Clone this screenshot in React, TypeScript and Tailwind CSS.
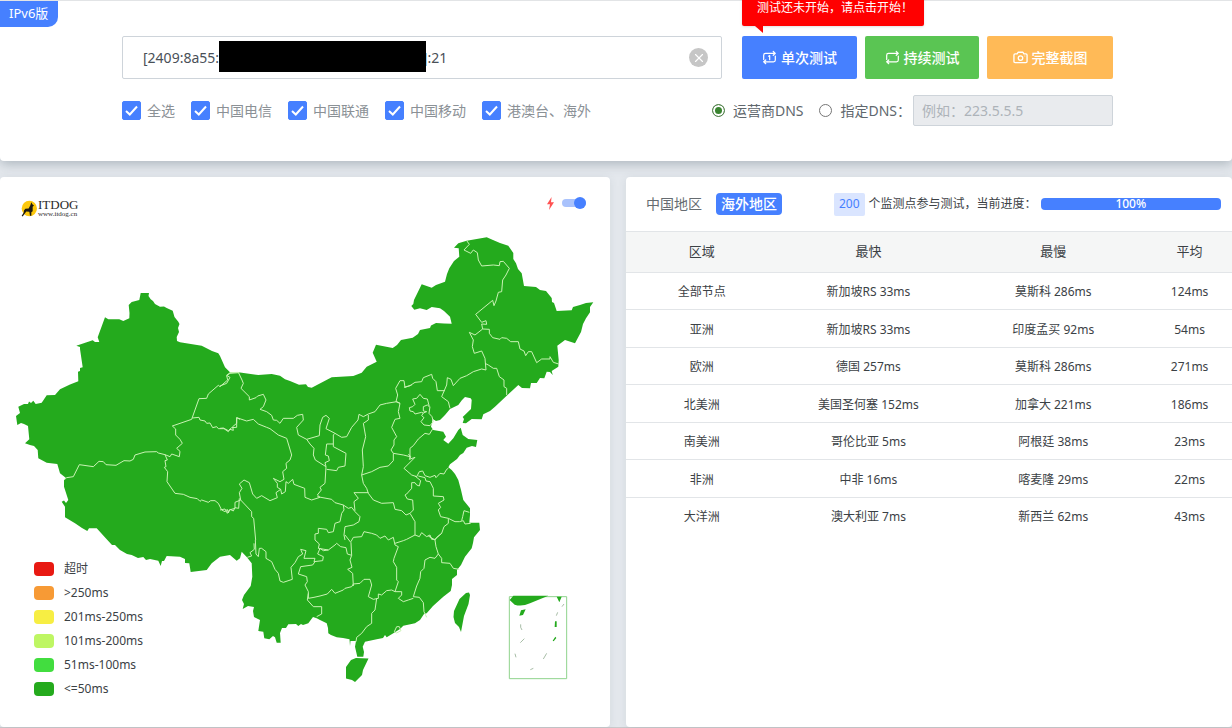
import { useState } from 'react';
import type { ReactNode } from 'react';
import { X } from 'lucide-react';

const carriers = ['全选', '中国电信', '中国联通', '中国移动', '港澳台、海外'];

const rows = [
  { area: '全部节点', fastest: '新加坡RS 33ms', slowest: '莫斯科 286ms', avg: '124ms' },
  { area: '亚洲', fastest: '新加坡RS 33ms', slowest: '印度孟买 92ms', avg: '54ms' },
  { area: '欧洲', fastest: '德国 257ms', slowest: '莫斯科 286ms', avg: '271ms' },
  { area: '北美洲', fastest: '美国圣何塞 152ms', slowest: '加拿大 221ms', avg: '186ms' },
  { area: '南美洲', fastest: '哥伦比亚 5ms', slowest: '阿根廷 38ms', avg: '23ms' },
  { area: '非洲', fastest: '中非 16ms', slowest: '喀麦隆 29ms', avg: '22ms' },
  { area: '大洋洲', fastest: '澳大利亚 7ms', slowest: '新西兰 62ms', avg: '43ms' },
];

const legend = [
  { label: '超时', color: 'bg-[#e81912]' },
  { label: '>250ms', color: 'bg-[#f79a35]' },
  { label: '201ms-250ms', color: 'bg-[#f7ee43]' },
  { label: '101ms-200ms', color: 'bg-[#bef663]' },
  { label: '51ms-100ms', color: 'bg-[#42dd3f]' },
  { label: '<=50ms', color: 'bg-[#24aa1d]' },
];

const mainland =
  '16,416 20,413 18.3,406.7 24,404 28,404 29,401.5 31,403 33.3,400.7 35.7,404 41.7,402.7 46.7,395.3 55,395 60,389.3 70,384.5 78.3,381.3 78,371.7 80,371 80,368 82.7,367.3 80,349 80,347 76.3,345.7 92.7,340.3 95,342 99.3,342 97.7,337.3 105,317.3 108.3,319.3 119.3,319.3 123.3,321 129.3,318.3 129.5,313 128.7,305 131.7,302 139.3,300 140.7,293 149,293 148.5,296 150.7,299.3 153,301 155,304 160,306.7 164,306.5 166.7,308 172.7,310.7 174.5,317 178.3,321.7 179.5,324 178,328 179,332 176.7,337 177,341 180,342.3 201.7,345.7 212,351 218.3,353.3 220,356 225,367.3 230,372.3 238.3,372.3 258.3,375 271.7,374 280,375.7 285,379.3 290,381 299,384.7 306,384.3 308,387 311.7,387.7 331.7,377.3 353.3,376 361.7,372.7 366.7,366.7 376.7,361.7 372.7,352.7 376,344.7 392.7,348 397,345 401,340 412.7,337.7 418,334 420,330 430,328 431,325.5 436,323 444,323.5 451.7,323.7 450,316.7 444,311 440,308.3 431.7,307 426.7,310 420,308.3 414.3,309.7 411.3,306 413.3,304 414,300 421.7,284.3 431.7,287.7 436,285 445,281.7 447,274 449.3,268.3 454,261 459.3,256.7 458.7,248.3 454,247.7 458.3,243.3 466.7,240.7 486.7,237.3 493,240 500,243 508.3,245.7 513.3,253 513.3,259 516,263.3 518,269 521.7,273.3 524,286 536,287 540,290 546,291 551.7,298 552,302 554,303 556.7,311 571.7,310.3 573,307 580,305 586,303 593.3,302.3 590,307 590,312.3 586,318.3 583,324 581,332 575,343.3 565,340 557.3,345.7 558.7,360 558.3,366.7 551.7,371 552.7,375 550,372 546.7,371.7 544.3,378.3 540,378 536.7,383 531,383 530,388.3 522,388 518.3,385 514,389 506.7,395.7 495,406.7 490,411 483.3,414.3 481.7,419.3 471.7,419 466,423.3 462.7,423 464,419 462.7,417 471,409 471.7,400 470.7,398.3 465,397 462,400 458.3,405 450,409 445,415 440,420 436,421 432.7,419 431,426.7 433.3,430 443.3,431.7 446,436.7 443.3,440 448.3,443.7 453.3,438.3 458.3,430 460.7,427.7 462.7,435 468.3,439 477.3,440 476,447 472,446 466.7,447.7 463.3,453 460,455 457,459 450,464.3 448.3,467.3 451.7,470 455,474 458.3,480 461,490 463.3,500 470,508.3 470,515 469.3,522.7 479.3,522.7 480,530 474,537.3 473,543 471.7,548.3 465,556.7 461,565 457,570 457,575 452,579 452,585 450.7,591 443.3,596.7 433,606 426.7,613.3 424,614 420,620 415,623.3 403.3,625.7 400,629 393.3,633.3 386.7,637.3 385,635 383,638 376.7,639.3 365,641.7 362.7,646.7 364,652 363.3,656.7 357.3,656.7 355,646.7 356,641 350.5,641 350,646 349.5,639.3 343,638 336.7,637.3 331,635 328.3,633.3 328,628 326.7,623.3 320,620 316.7,618.3 313,617 308.3,623.3 303,625 301,624 298.3,626 296,624 288.3,624.3 286,628 282,628 280,633 280.7,642.7 276.7,642.7 275,637.3 273,636 269.3,639.3 264.3,638.3 263.3,631.7 258.3,631 260,620 254,617 253,611 254,607 248,606 242.7,609 244,604 242,600 244,595 250.7,586 252.3,576.7 251.7,563.3 246.7,557 241.7,551.7 240,558.3 236.7,560.7 230,555 220,556.7 211.7,563.3 206.7,570 190.7,572 189.3,563.3 185,563 185,559 180,556.7 166.7,556 164,561 162,561 160.7,566 158.3,560.7 150,559 146,560 143.3,557 138,558 131.7,555 127,554 120,550 115,545 112,545 106.7,539.3 96.7,528.3 89,528.3 87.3,531 82,528 75,523.3 65,517.3 65,506.7 61.7,501.7 64,500.5 66,503 68.3,500 64,486.7 64,479.5 66,478 60,473.3 57.3,464 46.7,462.7 38.3,458.3 37.7,450 34,446 30,445 25,443.3 29.3,439.3 28,426 24,424 21,423 17.3,425';

// province borders, grouped by region and drawn at three times map scale
const borders = [
  {
    region: 'west',
    transform: 'translate(0 280) scale(.33333)',
    lines: [
      '192,600 200,593 220,590 238,554 280,560 297,544 310,545 318,554 348,556 372,542 390,543 400,538 405,525 435,516 470,515 475,519 495,524 510,530 515,522 538,530 540,514 530,505 547,490 540,478 527,465 527,447 517,438 575,418 597,356 620,355 625,342 655,316 660,320 683,300 680,287 690,280 718,278',
      '495,524 502,540 495,542 498,560 493,562 503,575 501,605 525,640 550,643 570,652 592,656 600,664 605,660 625,667 632,662 645,662 655,670 665,690 675,695 682,688 685,699 690,688 700,693 705,683 716,685 718,655',
      '577,414 597,412 600,420 615,423 620,430 630,429 638,443 650,440 655,446 672,446 685,455 690,448 700,451 698,440 710,430 710,413 720,418',
    ],
  },
  {
    region: 'centre',
    transform: 'translate(220 340) scale(.33333)',
    lines: [
      '0,138 20,130 30,112 20,106 30,98 55,97 66,120 70,130 63,145 88,170 88,180 108,173 113,168 130,163 138,180 130,200 120,208 140,215 155,226 160,240 170,241 180,250 190,235 220,235 232,226 248,223 250,240 230,262 235,285 260,298 298,287 300,255 308,232 318,226 328,235 318,266 345,280 365,292 380,290 395,262 414,240 417,223 430,230 445,222 465,215 480,195 500,190 530,185 540,190',
      '260,298 270,312 282,325 280,345 286,360 310,375 318,380 315,368 328,362 325,348 316,345 320,312 340,312 340,285 345,280',
      '340,312 340,320 378,340 375,378 355,382 350,392 320,388',
      '318,380 315,430 300,442 304,450 292,465 300,472 275,480 255,472 254,445 222,433 218,418 205,430 198,425 196,455 185,462 182,448 168,458 172,473 150,482 125,467 110,475 98,462 88,428 72,420 58,432 66,445 58,458 62,480 45,487 45,505 28,510 22,520 15,507 0,510',
      '0,265 10,264 25,272 35,263 50,262 50,233 80,243 100,238 115,252 140,262 150,266 175,285 200,295 207,318 215,345 210,360 198,370 200,385 188,395 192,418 180,425 160,415 172,430 172,442 182,448',
      '62,480 95,515 95,530 101,535 107,600',
      '292,470 335,478 345,488 370,495 385,505 395,502 405,515 420,530 417,545 400,555 375,560 372,585 375,600',
      '370,495 372,510 365,520 360,545 345,550 340,575 325,578 320,568 295,565 295,580 285,582 285,600',
      '445,225 445,240 430,250 437,290 427,330 430,380 425,405 430,430 440,445 445,460 460,480 485,490 520,488 525,508 545,512 558,525 570,520 585,545 585,585',
      '425,405 455,395 480,382 505,378 520,362 520,340 513,330 522,315 522,300 530,290 515,262 525,238 540,235 535,215 540,190 528,185 533,165 527,145 540,122 552,122 555,142 575,135',
      '520,340 550,345 570,350',
      '445,458 402,458 415,475 402,485 405,512',
    ],
  },
  {
    region: 'northeast',
    transform: 'translate(350 225) scale(.33333)',
    lines: [
      '350,47 358,58 342,75 362,85 370,75 382,83 385,105 395,123 430,120 448,122 450,110 460,109 478,130 468,150 458,165 455,200 445,202 438,228 432,242 428,226 377,268 395,292 408,287 410,298 395,297 398,312',
      '358,322 375,330 398,312 418,313 418,325 428,338 450,343 455,338 470,340 482,350 505,350 510,372 522,378 527,392 535,380 545,380 560,413 575,402 600,402 600,395 610,412 626,417',
      '358,322 370,345 367,365 373,385 395,378 405,400 408,435 395,432 370,440 350,452 330,460 310,482 303,463 292,458 290,480 275,515 295,530 300,550',
      '405,415 415,420 430,430 440,430 448,455 462,465 462,485 470,490 470,510',
      '285,497 262,497 258,470 248,460 245,448 220,458 215,470 195,472 180,482 162,487',
      '188,545 178,548 180,558 190,560 195,567 215,562 220,564 230,560 220,558 220,545 232,540 238,545 232,522 220,520 210,508 200,520 188,522 195,538 188,545',
      '220,564 215,572 222,578 213,590 222,600 240,602 250,590 246,575 237,565 240,545',
      '248,612 238,628 225,625 205,642 190,662 180,670 180,700',
    ],
  },
  {
    region: 'east',
    transform: 'translate(380 380) scale(.33333)',
    lines: [
      '85,222 92,230 88,238 105,232 72,265 95,285 110,290 118,275 128,273 135,287 150,292 165,286 168,293 180,280 192,282 200,268 205,265',
      '105,288 122,302 118,318 110,315 105,308 95,308 95,325 80,342 75,345 82,357 98,360 100,390 90,400',
      '115,288 135,293 138,303 150,305 160,325 160,348 190,350 192,360 175,370 182,382 175,390 182,410 205,415 225,425 238,425 250,422 255,432 272,430',
      '245,422 248,410 252,392 268,397',
      '205,415 205,430 192,440 185,460 165,478 155,478 150,465 140,470 125,458 118,470 105,465 80,478',
    ],
  },
  {
    region: 'south',
    transform: 'translate(220 480) scale(.33333)',
    lines: [
      '106,180 108,222 115,230 118,205 125,205 138,215 138,235 155,245 165,268 175,280 180,303 190,307 217,298 213,262 225,248 235,230 248,222 242,208 258,212 252,235 285,235 282,245 308,242 310,230 293,222 300,205 310,212 325,210 345,195 350,190 362,200 378,203 382,222 395,226',
      '285,180 298,192 295,205 325,210',
      '375,165 393,188 395,226 390,240 396,262 383,268 398,280 400,318',
      '285,245 278,255 242,260 235,282 260,290 262,305 255,315 265,335 265,355 282,352 300,348 322,342 335,328 345,340 370,330 375,325 395,320 400,312 420,310 432,298 450,298 455,315 445,350 460,358 475,355 475,342 485,345 500,332 515,330 525,335',
      '265,340 262,360 280,380 305,380 305,402 290,410',
      '393,185 400,172 425,170 432,155 455,160 470,165 480,175 495,168 505,180 520,172 525,195 535,200 522,235 520,245 530,262 530,300 535,305 525,335 545,335 545,345 535,355 550,365 565,360 580,355',
      '470,355 465,390 455,400 455,430 440,440 425,460 410,472 408,485',
      '525,190 550,182 560,178',
      '625,168 645,180 648,200 655,222 645,235 630,232 615,240 612,265 602,275 600,295 590,318 580,350 598,352 610,368 612,395 620,412',
      '645,180 650,172 665,160',
      '655,222 665,235 665,248 690,250 700,265 718,268',
      '82,232 95,228 90,218 103,208 102,190',
      '523,455 530,440 538,440 543,452 530,459 523,455',
    ],
  },
];

function ChinaMap() {
  return (
    <svg viewBox="0 217 610 480" className="block w-full" role="img" aria-label="map">
      <g fill="#24aa1d">
        <polygon points={mainland} />
        <polygon points="346,667 351,660 356,658 368.5,658.5 363,670 362,675 355,682 352,680 346,678.5" />
        <polygon points="466,593 469,592.5 470,595 468.5,604 464,616 461,632 459,627 455,623 453.5,617 454,611 459.5,599" />
      </g>
      {borders.map((group) => (
        <g key={group.region} transform={group.transform} fill="none" stroke="#c9f3b4" strokeWidth="3" strokeLinejoin="round">
          {group.lines.map((line) => (
            <polyline key={line} points={line} />
          ))}
        </g>
      ))}
      {/* South China Sea inset */}
      <g transform="translate(480 560) scale(.33333)">
        <path d="M88 110H260V356H88Z" fill="none" stroke="#8fd38c" strokeWidth="3" />
        <path d="M100 107H205L150 130Q125 141 104 134L89 120Z" fill="#24aa1d" />
        <path d="M230 110H245L238 127ZM123 151L137 148L129 165L118 167ZM225 184H230V201H224ZM226 230L229 234L221 244L218 242Z" fill="#24aa1d" />
        <path d="M252 132L246 140M233 157L229 167M122 193V202L126 210M133 236L121 248M105 281L108 292M200 280L190 297M151 329L160 325" fill="none" stroke="#7a9c78" strokeWidth="2" />
      </g>
    </svg>
  );
}

function LoopIcon({ once }: { once?: boolean }) {
  return (
    <svg viewBox="0 0 16 16" className="size-[15px]" fill="none" stroke="currentColor" strokeWidth="1.3" strokeLinecap="round" strokeLinejoin="round">
      <path d="M1.8 10V5.6Q1.8 3.6 3.8 3.6H14M12 1.6L14.2 3.6L12 5.6" />
      <path d="M14.2 6.4V10.6Q14.2 12.6 12.2 12.6H2M4 10.6L1.8 12.6L4 14.6" />
      {once && <path d="M7 6.6L8.2 5.9V10.4" />}
    </svg>
  );
}

function CameraIcon() {
  return (
    <svg viewBox="0 0 16 16" className="size-[15px]" fill="none" stroke="currentColor" strokeWidth="1.4" strokeLinejoin="round">
      <path d="M2.2 4.2H4.4L5.4 2.4H10.6L11.6 4.2H13.8Q15 4.2 15 5.4V12.2Q15 13.4 13.8 13.4H2.2Q1 13.4 1 12.2V5.4Q1 4.2 2.2 4.2Z" />
      <circle cx="8" cy="8.6" r="2.4" />
      <path d="M12.4 6.4H13" />
    </svg>
  );
}

function ActionButton({ color, icon, children }: { color: string; icon: ReactNode; children: ReactNode }) {
  return (
    <button className={`flex h-full items-center justify-center gap-1 rounded-xs text-sm font-medium text-white ${color}`}>
      {icon}
      {children}
    </button>
  );
}

function Logo() {
  return (
    <div className="mt-[3px] flex items-center gap-px">
      <svg viewBox="0 0 48 50" className="h-[17px] w-4">
        <circle cx="25" cy="25" r="23" fill="#fcc80d" />
        <path d="M31 6L34 12L39 16L35 20L35 33L31 36L31 47H27L25 35L16 34L11 41L5 49L2 47L8 38L9 31L13 26L23 25L28 15Z" fill="#1c1a12" />
      </svg>
      <div className="flex flex-col font-['Liberation_Serif',serif] text-[#2a2a2a]">
        <span className="text-[13px] leading-[13px]">ITDOG</span>
        <span className="text-[7px] leading-[7px]">www.itdog.cn</span>
      </div>
    </div>
  );
}

export default function App() {
  const [dns, setDns] = useState('isp');
  const [host, setHost] = useState(`[2409:8a55:${'\u00a0'.repeat(56)}]:21`);

  return (
    <div className="flex min-h-screen flex-col border-b border-[#c8cacc] bg-[#e4e8ed] font-['Noto_Sans','Noto_Sans_CJK_SC',sans-serif] text-[#3b4145]">
      <section className="relative rounded-b-sm border-t border-[#e2e4e6] bg-white pt-[35px] pr-[119px] pb-[35px] pl-[122px] shadow-[0_3px_12px_rgba(69,90,100,0.35)]">
        <span className="absolute top-0 left-0 flex h-[26px] items-center rounded-br-[10px] bg-[#4680ff] pr-2.5 pl-[9px] text-[13px] text-white">
          IPv6版
        </span>

        <div className="flex h-[43px] gap-5">
          <div className="relative flex-1">
            <input
              aria-label="host"
              value={host}
              onChange={(e) => setHost(e.target.value)}
              className="h-full w-full rounded-xs border border-[#ced4da] bg-white pr-10 pl-5 text-sm text-[#495057] outline-none"
            />
            <span className="absolute top-[5px] left-[97px] h-[31px] w-[207px] bg-black" />
            <button
              aria-label="clear"
              className="absolute top-3 right-3.5 flex size-[19px] items-center justify-center rounded-full bg-[#c6c6c6] text-white"
            >
              <X className="size-3.5" strokeWidth={2} />
            </button>
          </div>
          <div className="relative grid grid-cols-[115px_114px_126px] gap-2">
            <ActionButton color="bg-[#4680ff]" icon={<LoopIcon once />}>单次测试</ActionButton>
            <ActionButton color="bg-[#5ac553]" icon={<LoopIcon />}>持续测试</ActionButton>
            <ActionButton color="bg-[#ffba57]" icon={<CameraIcon />}>完整截图</ActionButton>
            <div className="absolute bottom-full left-0 mb-2.5 flex h-9 items-center rounded-xs bg-[#ff0000] pr-[11px] pl-[15px] text-xs whitespace-nowrap text-white shadow-sm">
              测试还未开始，请点击开始！
              <svg viewBox="0 0 8 7" className="absolute top-full left-[13px] h-[7px] w-2">
                <path d="M0 0H8V7Z" fill="#ff0000" />
              </svg>
            </div>
          </div>
        </div>

        <div className="mt-4 flex h-[31px] items-center justify-between text-sm">
          <div className="flex items-center gap-4 text-[#8b9196]">
            {carriers.map((name) => (
              <label key={name} className="flex items-center gap-1.5">
                <span className="relative size-[19px]">
                  <input type="checkbox" defaultChecked className="peer block size-full appearance-none rounded-xs border border-[#4680ff] checked:bg-[#4680ff]" />
                  <svg viewBox="0 0 19 19" className="pointer-events-none absolute inset-0 hidden peer-checked:block" fill="none" stroke="#fff" strokeWidth="2">
                    <path d="M4 10L7.8 13.5L15 5.5" />
                  </svg>
                </span>
                {name}
              </label>
            ))}
          </div>
          <div className="flex items-center text-[#60676d]">
            <label className="mr-4 flex items-center gap-2">
              <input
                type="radio"
                name="dns"
                checked={dns === 'isp'}
                onChange={() => setDns('isp')}
                className="size-[13px] appearance-none rounded-full border border-[#767676] checked:border-[#55804e] checked:bg-[#3a8430] checked:shadow-[inset_0_0_0_2px_#fff]"
              />
              运营商DNS
            </label>
            <label className="mr-0.5 flex items-center gap-2">
              <input
                type="radio"
                name="dns"
                checked={dns === 'custom'}
                onChange={() => setDns('custom')}
                className="size-[13px] appearance-none rounded-full border border-[#767676] checked:border-[#55804e] checked:bg-[#3a8430] checked:shadow-[inset_0_0_0_2px_#fff]"
              />
              指定DNS：
            </label>
            <input
              aria-label="DNS"
              disabled={dns !== 'custom'}
              placeholder="例如：223.5.5.5"
              className="h-[31px] w-[200px] rounded-xs border border-[#ced4da] px-2 text-sm placeholder:text-[#adb3b9] disabled:bg-[#e9ebee]"
            />
          </div>
        </div>
      </section>

      <main className="mt-4 grid flex-1 grid-cols-[610fr_606fr] gap-4">
        <section className="relative rounded-sm bg-white shadow-[0_1px_8px_rgba(69,90,100,0.1)]">
          <div className="flex h-10 items-start justify-between pt-[18px] pr-6 pl-[21px]">
            <Logo />
            <label className="flex items-center gap-2">
              <svg viewBox="0 0 7 13" className="h-[13px] w-[7px]">
                <path d="M4.6 0L0 7.2H3L2 13L7 5.3H4Z" fill="#ff5252" />
              </svg>
              <span className="relative flex h-4 w-6 items-center">
                <input type="checkbox" defaultChecked aria-label="auto" className="peer h-2 w-full appearance-none rounded-full bg-[#a9c2fc]" />
                <span className="pointer-events-none absolute right-0 size-3 rounded-full bg-[#4680ff]" />
              </span>
            </label>
          </div>
          <ChinaMap />
          <ul className="absolute bottom-[26px] left-[34px] text-xs">
            {legend.map((item) => (
              <li key={item.label} className="flex h-6 items-center gap-2.5">
                <span className={`h-3.5 w-5 rounded-sm ${item.color}`} />
                {item.label}
              </li>
            ))}
          </ul>
        </section>

        <section className="rounded-sm bg-white shadow-[0_1px_8px_rgba(69,90,100,0.1)]">
          <div className="flex h-[54px] items-center pr-[11px] pl-5 text-sm">
            <button className="text-[#666c71]">中国地区</button>
            <button className="ml-3.5 h-[22px] rounded-sm bg-[#4680ff] px-[5px] font-medium text-white">海外地区</button>
            <span className="ml-[52px] flex h-[23px] items-center rounded-xs bg-[#dae5ff] px-[5px] text-xs text-[#4680ff]">200</span>
            <span className="ml-1 text-xs whitespace-nowrap">个监测点参与测试，当前进度：</span>
            <div className="ml-1 flex h-3 flex-1 items-center justify-center rounded-sm bg-[#4680ff] text-xs font-medium text-white">
              100%
            </div>
          </div>
          <table className="w-full table-fixed border-collapse text-center text-xs">
            <thead>
              <tr className="h-[41px] border-y border-[#e2e5e8] bg-[#f5f6f6] text-[13px]">
                <th className="w-[25%] font-normal">区域</th>
                <th className="w-[30%] font-normal">最快</th>
                <th className="w-[31%] font-normal">最慢</th>
                <th className="w-[14%] font-normal">平均</th>
              </tr>
            </thead>
            <tbody>
              {rows.map((row) => (
                <tr key={row.area} className="h-[37px] border-b border-[#e2e5e8] last:border-b-0 even:h-[38px]">
                  <td className="pt-0.5">{row.area}</td>
                  <td className="pt-0.5">{row.fastest}</td>
                  <td className="pt-0.5">{row.slowest}</td>
                  <td className="pt-0.5">{row.avg}</td>
                </tr>
              ))}
            </tbody>
          </table>
        </section>
      </main>
    </div>
  );
}
